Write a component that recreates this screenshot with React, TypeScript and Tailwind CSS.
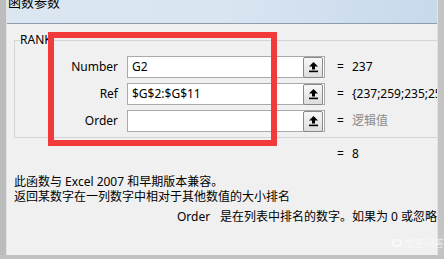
import React from "react";

const rows = [
  { label: "Number", value: "G2", result: "237", muted: false },
  { label: "Ref", value: "$G$2:$G$11", result: "{237;259;235;259;241;258;248;253;247;255}", muted: false },
  { label: "Order", value: "", result: "逻辑值", muted: true },
];

function RefButton() {
  return (
    <div className="w-[20px] h-[21px] rounded-[2px] border border-[#8a8a8a] bg-gradient-to-b from-[#f7f7f7] to-[#dedede] flex items-center justify-center shrink-0">
      <svg width="11" height="12" viewBox="0 0 11 12">
        <path d="M5.5 1 L10 5.5 L7 5.5 L7 8.5 L4 8.5 L4 5.5 L1 5.5 Z" fill="#000" />
        <rect x="1" y="9.6" width="9" height="1.6" fill="#000" />
      </svg>
    </div>
  );
}

export default function App() {
  return (
    <div
      className="relative w-[444px] h-[259px] overflow-hidden bg-[#bfbfbf] flex flex-col text-[12px] text-black"
      style={{ fontFamily: '"Noto Sans", "Noto Sans CJK SC", sans-serif' }}
    >
      <div className="flex flex-1 min-h-0">
        <div className="w-[7px] bg-[#bcbcbc] border-r border-[#e2e2e2]" />
        <div className="flex-1 flex flex-col min-w-0">
          {/* title bar */}
          <div className="h-[24px] shrink-0 bg-gradient-to-r from-[#dbe6f1] via-[#d9e5f1] to-[#c8d9ec] border-b border-[#8d9db0] overflow-hidden">
            <div className="pl-[1px] -mt-[8px] text-[13px] leading-[20px]">函数参数</div>
          </div>

          {/* body */}
          <div className="flex-1 bg-[#f0f0f0] pl-[7px] pt-[9px] flex flex-col">
            <fieldset className="w-[460px] border border-[#d4d4d4] pt-[0px] pb-[5px] m-0 px-0">
              <legend className="ml-[5px] px-0 text-[12px] leading-[14px]">RANK</legend>
              <div className="flex flex-col gap-[5px] pt-[9px]">
                {rows.map((r) => (
                  <div key={r.label} className="flex items-center h-[22px]">
                    <div className="w-[103px] text-right leading-none">{r.label}</div>
                    <div className="ml-[9px] w-[198px] h-[22px] bg-white border border-[#a9a9a9] flex items-center justify-between pl-[4px] pr-[1px]">
                      <span className="leading-none">{r.value}</span>
                      <RefButton />
                    </div>
                    <div className="ml-[12px] w-[15px] leading-none">=</div>
                    <div className={`whitespace-nowrap leading-none ${r.muted ? "text-[#8c8c8c]" : ""}`}>{r.result}</div>
                  </div>
                ))}
              </div>
            </fieldset>

            <div className="flex mt-[8px] h-[16px] items-center">
              <div className="ml-[323px] w-[15px] leading-none">=</div>
              <div className="leading-none">8</div>
            </div>

            <div className="mt-[12px] leading-[15px] whitespace-nowrap">
              <div>此函数与 Excel 2007 和早期版本兼容。</div>
              <div>返回某数字在一列数字中相对于其他数值的大小排名</div>
            </div>

            <div className="mt-[5px] flex whitespace-nowrap leading-[15px]">
              <div className="ml-[163px] w-[43px]">Order</div>
              <div>是在列表中排名的数字。如果为 0 或忽略</div>
            </div>
          </div>
        </div>
        <div className="w-[7px] bg-[#c4c4c4] border-l border-[#e2e2e2]" />
      </div>
      <div className="h-[4px] bg-[#c2c2c2] shrink-0" />

      {/* red annotation box */}
      <div className="absolute left-[48px] top-[32px] w-[229px] h-[114px] border-[6px] border-[#f33a3a]" />

      {/* watermark */}
      <div className="absolute left-[392px] top-[238px] flex items-center gap-[2px] text-white/60 text-[10px] leading-none">
        <span className="w-[10px] h-[8px] rounded-full border-[2px] border-white/60" />
        <span>悟空问答</span>
      </div>
    </div>
  );
}
